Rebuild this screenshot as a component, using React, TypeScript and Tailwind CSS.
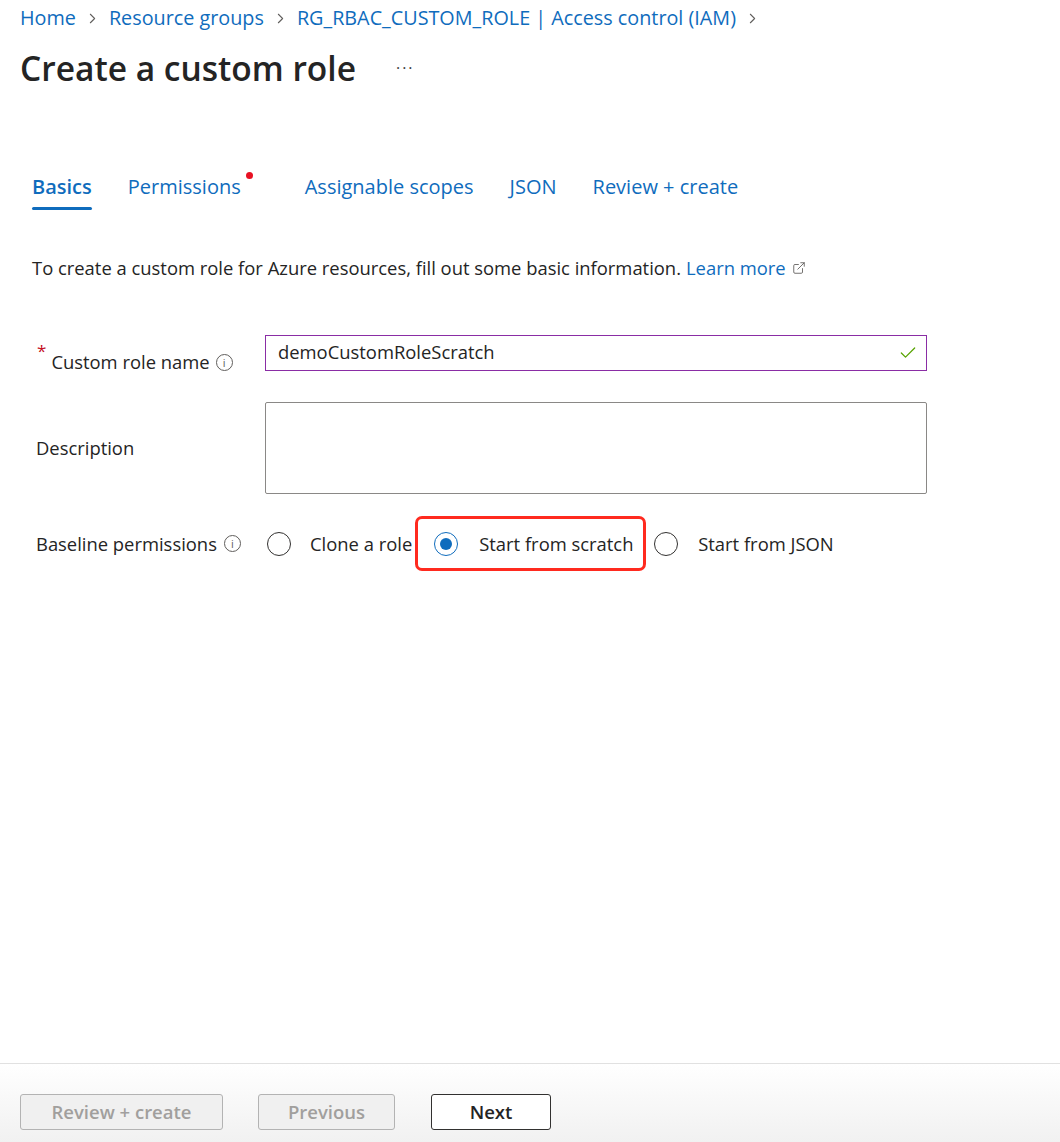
import { Check, ChevronRight, ExternalLink } from "lucide-react";

const font = { fontFamily: '"Open Sans", "Noto Sans", sans-serif' };

function Radio({ checked }: { checked?: boolean }) {
  return (
    <span
      className={`flex h-[24px] w-[24px] shrink-0 items-center justify-center rounded-full border ${
        checked ? "border-[#0f6cbd]" : "border-[#323130]"
      } bg-white`}
    >
      {checked && <span className="h-[12px] w-[12px] rounded-full bg-[#0f6cbd]" />}
    </span>
  );
}

function InfoIcon() {
  return (
    <span className="flex h-[17px] w-[17px] shrink-0 items-center justify-center rounded-full border border-[#605e5c] text-[11px] leading-none text-[#605e5c]">
      i
    </span>
  );
}

export default function App() {
  const crumbs = ["Home", "Resource groups", "RG_RBAC_CUSTOM_ROLE | Access control (IAM)"];
  const tabs = ["Basics", "Permissions", "Assignable scopes", "JSON", "Review + create"];

  return (
    <div className="flex h-[1142px] w-[1060px] flex-col bg-white text-[#242424]" style={font}>
      <div className="flex-1">
        {/* Breadcrumb */}
        <nav className="flex items-center gap-[8px] px-[20px] pt-[5px] text-[19.8px] leading-[26px] text-[#0f6cbd]">
          {crumbs.map((c) => (
            <span key={c} className="flex items-center gap-[8px]">
              <span>{c}</span>
              <ChevronRight className="h-[17px] w-[17px] text-[#605e5c]" strokeWidth={1.5} />
            </span>
          ))}
        </nav>

        {/* Title */}
        <div className="mt-[15px] flex items-center px-[20px]">
          <h1 className="text-[33.5px] font-semibold leading-[44px] text-[#242424]">
            Create a custom role
          </h1>
          <span className="ml-[40px] text-[16px] leading-none tracking-[2px] text-[#424242]">···</span>
        </div>

        {/* Tabs */}
        <div className="mt-[84px] flex items-start gap-[36px] px-[32px] text-[20px] leading-[26px] text-[#0f6cbd]">
          {tabs.map((t, i) => (
            <div key={t} className={`relative flex flex-col ${i === 1 ? "mr-[28px]" : ""}`}>
              <span className={i === 0 ? "font-semibold" : ""}>{t}</span>
              <span className={`mt-[7px] h-[3px] w-full rounded-sm ${i === 0 ? "bg-[#0f6cbd]" : "bg-transparent"}`} />
              {i === 1 && (
                <span className="absolute -right-[12px] top-[-2px] h-[7px] w-[7px] rounded-full bg-[#e81123]" />
              )}
            </div>
          ))}
        </div>

        {/* Intro */}
        <p className="mt-[46px] flex items-center px-[32px] text-[18.4px] leading-[24px]">
          To create a custom role for Azure resources, fill out some basic information.
          <span className="ml-[5px] flex items-center gap-[6px] text-[#0f6cbd]">
            Learn more
            <ExternalLink className="h-[14px] w-[14px] text-[#605e5c]" strokeWidth={1.5} />
          </span>
        </p>

        {/* Form */}
        <div className="mt-[55px] flex flex-col px-[36px] text-[18.4px]">
          <div className="flex items-center">
            <div className="relative top-[9px] flex w-[229px] items-center gap-[6px]">
              <span className="flex items-start">
                <span className="-mt-[8px] ml-[1px] mr-[5px] text-[17px] leading-[17px] text-[#c50f1f]">*</span>
                <span className="leading-[24px]">Custom role name</span>
              </span>
              <InfoIcon />
            </div>
            <div className="flex h-[36px] w-[662px] items-center justify-between border border-[#8a2da5] pl-[12px] pr-[8px]">
              <span className="mb-[2px]">demoCustomRoleScratch</span>
              <Check className="h-[20px] w-[20px] text-[#57a300]" strokeWidth={1.5} />
            </div>
          </div>

          <div className="mt-[31px] flex items-center">
            <div className="w-[229px]">Description</div>
            <div className="h-[92px] w-[662px] rounded-[2px] border border-[#8a8886]" />
          </div>

          <div className="mt-[22px] flex items-center">
            <div className="flex w-[231px] items-center gap-[7px]">
              <span>Baseline permissions</span>
              <InfoIcon />
            </div>
            <div className="flex items-center">
              <Radio />
              <span className="ml-[19px]">Clone a role</span>
              <div className="ml-[3px] flex h-[55px] w-[231px] items-center rounded-[7px] border-[3px] border-[#ff2a1f] pl-[16px]">
                <Radio checked />
                <span className="ml-[21px]">Start from scratch</span>
              </div>
              <span className="ml-[8px]">
                <Radio />
              </span>
              <span className="ml-[20px]">Start from JSON</span>
            </div>
          </div>
        </div>
      </div>

      {/* Footer */}
      <div className="h-[79px] border-t border-[#e1e1e1] bg-gradient-to-b from-white to-[#f1f1f1] px-[20px] pt-[30px]">
        <div className="flex items-center text-[18.5px] font-semibold">
          <button className="h-[36px] w-[203px] rounded-[3px] border border-[#b3b3b3] bg-[#f0f0f0] text-[#a19f9d]">
            Review + create
          </button>
          <button className="ml-[35px] h-[36px] w-[137px] rounded-[3px] border border-[#b3b3b3] bg-[#f0f0f0] text-[#a19f9d]">
            Previous
          </button>
          <button className="ml-[36px] h-[36px] w-[120px] rounded-[3px] border border-[#323130] bg-white text-[#242424]">
            Next
          </button>
        </div>
      </div>
    </div>
  );
}
